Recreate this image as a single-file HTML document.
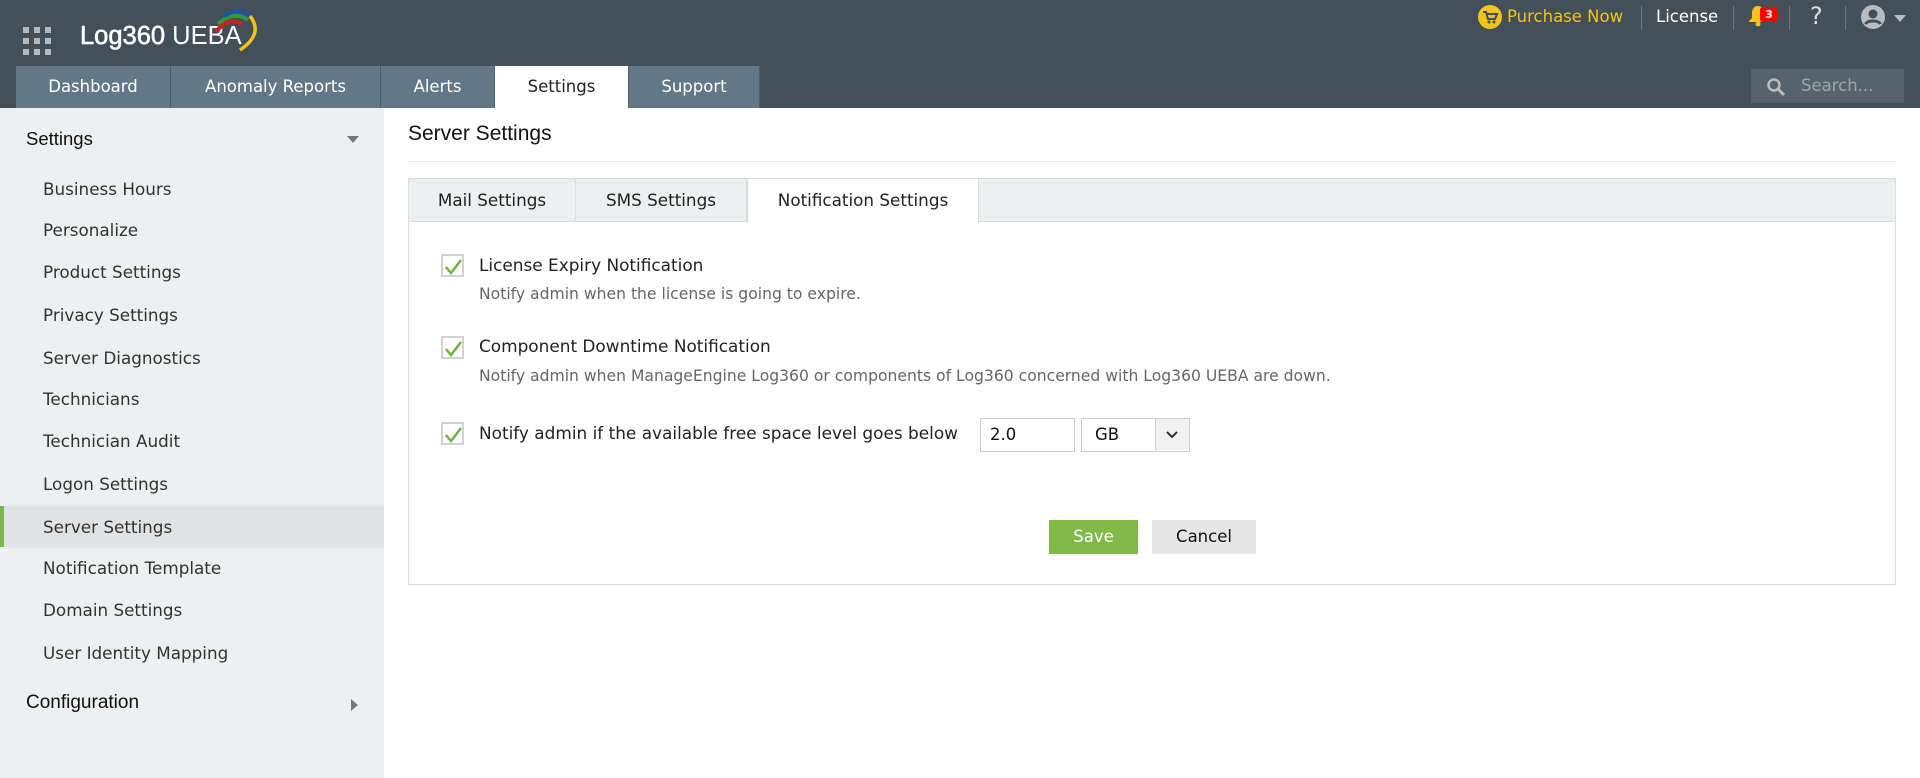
<!DOCTYPE html>
<html><head><meta charset="utf-8"><style>
*{box-sizing:border-box;margin:0;padding:0}
body{width:1920px;height:778px;overflow:hidden;font-family:"DejaVu Sans","Liberation Sans",sans-serif;background:#fff;position:relative;color:#333}
.abs{position:absolute}
.hdr{left:0;top:0;width:1920px;height:108px;background:#434f59}
.grid{left:23px;top:27px;width:28px;height:29px}
.grid i{position:absolute;width:6px;height:6px;background:#b4b9bd}
.logo{left:80px;top:22px;font-family:"Liberation Sans",sans-serif;font-size:25.5px;color:#fff;white-space:nowrap}
.tab{top:66px;height:42px;background:#627886;color:#fff;font-size:16.5px;line-height:42px;text-align:center;border-right:1px solid #4d5e69;white-space:nowrap}
.tab.act{background:#fff;color:#222}
.tr{top:4px;font-size:16.5px;line-height:26px}
.sep{top:6px;width:1px;height:24px;background:#6d7981}
.side{left:0;top:108px;width:384px;height:670px;background:#ecf0f1}
.si{left:43px;font-size:16.8px;color:#333;line-height:20px;white-space:nowrap}
.sh{left:26px;font-family:"Liberation Sans",sans-serif;font-size:18.5px;color:#111}
.pt{height:43px;line-height:43px;font-size:16.8px;color:#222;text-align:center;background:#ecf0f1;border-right:1px solid #d8dcdd;border-bottom:1px solid #d8dcdd;white-space:nowrap}
.cb{left:441px;width:23px;height:23px;border:2px solid #cfd3d4;background:#fff}
.lab{left:479px;font-size:16.9px;color:#222;white-space:nowrap}
.desc{left:479px;font-size:15.6px;color:#666;white-space:nowrap}
</style></head><body>
<div class="abs hdr"></div>
<div class="abs grid">
<i style="left:0;top:0"></i><i style="left:11px;top:0"></i><i style="left:22px;top:0"></i>
<i style="left:0;top:11px"></i><i style="left:11px;top:11px"></i><i style="left:22px;top:11px"></i>
<i style="left:0;top:22px"></i><i style="left:11px;top:22px"></i><i style="left:22px;top:22px"></i>
</div>
<div class="abs logo"><span style="-webkit-text-stroke:0.6px #fff">Log360</span> UEBA</div>
<svg class="abs" style="left:212px;top:8px" width="52" height="44" viewBox="0 0 52 44">
<path d="M4 24 Q16 8 30 16" stroke="#d0201f" stroke-width="4" fill="none"/>
<path d="M6 16 Q22 2 36 12" stroke="#2c9a3a" stroke-width="4" fill="none"/>
<path d="M12 8 Q28 -2 40 10" stroke="#2451a8" stroke-width="4" fill="none"/>
<path d="M38 8 Q52 26 28 42" stroke="#f0c419" stroke-width="3.5" fill="none"/>
</svg>
<div class="abs tab" style="left:16px;width:155px">Dashboard</div>
<div class="abs tab" style="left:171px;width:210px">Anomaly Reports</div>
<div class="abs tab" style="left:381px;width:114px">Alerts</div>
<div class="abs tab act" style="left:495px;width:134px">Settings</div>
<div class="abs tab" style="left:629px;width:131px">Support</div>

<svg class="abs" style="left:1478px;top:5px" width="24" height="24" viewBox="0 0 24 24"><circle cx="12" cy="12" r="12" fill="#f0c419"/><path d="M5 7h3l2 7h7l2-5H9" stroke="#434f59" stroke-width="2" fill="none"/><circle cx="11" cy="17" r="1.5" fill="#434f59"/><circle cx="16" cy="17" r="1.5" fill="#434f59"/></svg>
<div class="abs tr" style="left:1507px;color:#f0c419">Purchase Now</div>
<div class="abs sep" style="left:1641px"></div>
<div class="abs tr" style="left:1656px;color:#fff">License</div>
<div class="abs sep" style="left:1733px"></div>
<svg class="abs" style="left:1748px;top:5px" width="20" height="22" viewBox="0 0 20 22"><path d="M10 1c-4 0-6 3-6 7v5l-3 3v1h18v-1l-3-3V8c0-4-2-7-6-7z" fill="#f0c419"/><circle cx="10" cy="19" r="2.5" fill="#f0c419"/></svg>
<div class="abs" style="left:1760px;top:7px;width:18px;height:15px;background:#f00;border-radius:3px;color:#fff;font-size:11px;line-height:15px;text-align:center;font-weight:bold">3</div>
<div class="abs sep" style="left:1789px"></div>
<div class="abs tr" style="left:1810px;color:#ddd;font-size:24px;top:3px">?</div>
<div class="abs sep" style="left:1845px"></div>
<svg class="abs" style="left:1861px;top:5px" width="24" height="24" viewBox="0 0 24 24"><circle cx="12" cy="12" r="12" fill="#b7bcc0"/><circle cx="12" cy="9" r="4.5" fill="#434f59"/><path d="M4.5 19c2-4 13-4 15 0" stroke="#434f59" stroke-width="3" fill="none"/></svg>
<svg class="abs" style="left:1894px;top:15px" width="12" height="7"><path d="M0 0h12L6 7z" fill="#b7bcc0"/></svg>
<div class="abs" style="left:1751px;top:69px;width:153px;height:34px;background:#56636d"></div>
<svg class="abs" style="left:1766px;top:77px" width="20" height="20" viewBox="0 0 20 20"><circle cx="8" cy="8" r="5.5" stroke="#b7bcc0" stroke-width="2.5" fill="none"/><path d="M12 12l6 6" stroke="#b7bcc0" stroke-width="3"/></svg>
<div class="abs" style="left:1801px;top:76px;font-size:16.5px;color:#9ea6ab">Search...</div>

<div class="abs side"></div>
<div class="abs sh" style="top:128px">Settings</div>
<svg class="abs" style="left:347px;top:136px" width="12" height="7"><path d="M0 0h12L6 7z" fill="#777"/></svg>
<div class="abs" style="left:0;top:506px;width:384px;height:41px;background:#e0e2e3"></div>
<div class="abs" style="left:0;top:506px;width:4px;height:41px;background:#7ab648"></div>
<div class="abs si" style="top:179px">Business Hours</div>
<div class="abs si" style="top:220px">Personalize</div>
<div class="abs si" style="top:262px">Product Settings</div>
<div class="abs si" style="top:305px">Privacy Settings</div>
<div class="abs si" style="top:348px">Server Diagnostics</div>
<div class="abs si" style="top:389px">Technicians</div>
<div class="abs si" style="top:431px">Technician Audit</div>
<div class="abs si" style="top:474px">Logon Settings</div>
<div class="abs si" style="top:517px">Server Settings</div>
<div class="abs si" style="top:558px">Notification Template</div>
<div class="abs si" style="top:600px">Domain Settings</div>
<div class="abs si" style="top:643px">User Identity Mapping</div>
<div class="abs sh" style="top:692px;font-size:19px">Configuration</div>
<svg class="abs" style="left:351px;top:699px" width="7" height="12"><path d="M0 0v12l7-6z" fill="#777"/></svg>

<div class="abs" style="left:408px;top:122px;font-family:'Liberation Sans',sans-serif;font-size:21px;color:#111">Server Settings</div>
<div class="abs" style="left:408px;top:161px;width:1488px;height:1px;background:#e3e5e6"></div>
<div class="abs" style="left:408px;top:178px;width:1488px;height:407px;border:1px solid #d8dcdd"></div>
<div class="abs" style="left:409px;top:179px;width:1486px;height:43px;background:#ecf0f1;border-bottom:1px solid #d8dcdd"></div>
<div class="abs pt" style="left:409px;top:179px;width:167px">Mail Settings</div>
<div class="abs pt" style="left:576px;top:179px;width:171px">SMS Settings</div>
<div class="abs pt" style="left:747px;top:179px;height:44px;width:232px;background:#fff;border-bottom:none;border-left:1px solid #d8dcdd">Notification Settings</div>

<svg width="0" height="0" style="position:absolute"><defs><path id="ck" d="M3 11l5 6 10-13" stroke="#6cb33f" stroke-width="2.5" fill="none"/></defs></svg>
<div class="abs cb" style="top:254px"><svg width="19" height="19"><use href="#ck"/></svg></div>
<div class="abs lab" style="top:255px">License Expiry Notification</div>
<div class="abs desc" style="top:285px">Notify admin when the license is going to expire.</div>
<div class="abs cb" style="top:336px"><svg width="19" height="19"><use href="#ck"/></svg></div>
<div class="abs lab" style="top:336px">Component Downtime Notification</div>
<div class="abs desc" style="top:367px">Notify admin when ManageEngine Log360 or components of Log360 concerned with Log360 UEBA are down.</div>
<div class="abs cb" style="top:422px"><svg width="19" height="19"><use href="#ck"/></svg></div>
<div class="abs lab" style="top:423px">Notify admin if the available free space level goes below</div>
<div class="abs" style="left:980px;top:418px;width:95px;height:34px;border:1px solid #ccc;font-size:16.5px;line-height:32px;padding-left:9px;color:#111">2.0</div>
<div class="abs" style="left:1081px;top:418px;width:109px;height:34px;border:1px solid #ccc;font-size:16.5px;line-height:32px;padding-left:13px;color:#111">GB</div>
<div class="abs" style="left:1155px;top:419px;width:34px;height:31px;background:#f1f1f1;border-left:1px solid #ccc"></div>
<svg class="abs" style="left:1166px;top:431px" width="12" height="8"><path d="M1 1l5 5 5-5" stroke="#333" stroke-width="2" fill="none"/></svg>
<div class="abs" style="left:1049px;top:520px;width:89px;height:34px;background:#7fba48;color:#fff;font-size:16.5px;line-height:34px;text-align:center">Save</div>
<div class="abs" style="left:1152px;top:520px;width:104px;height:34px;background:#e6e6e6;color:#111;font-size:16.5px;line-height:34px;text-align:center">Cancel</div>
</body></html>
